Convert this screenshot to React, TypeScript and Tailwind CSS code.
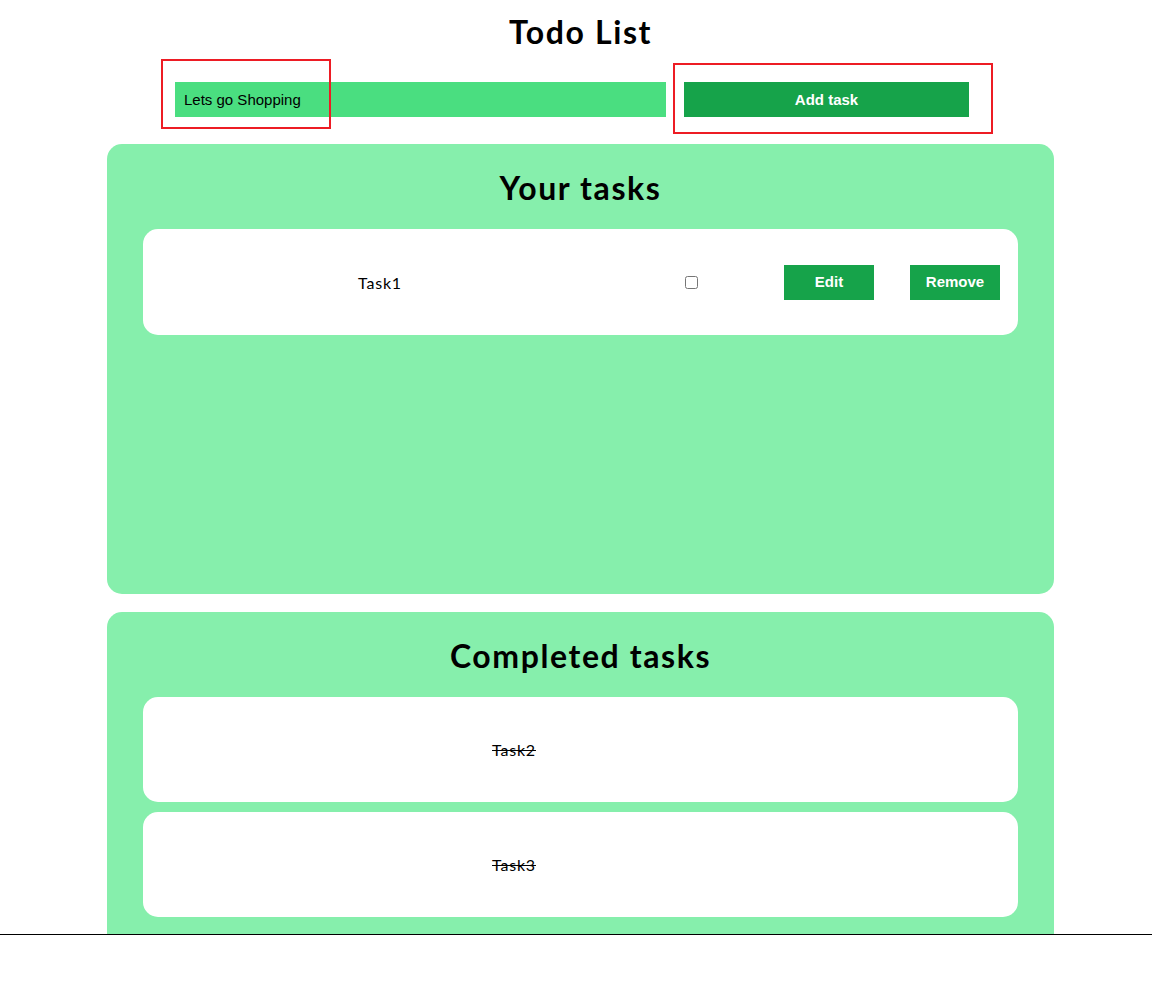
import React from "react";

export default function App() {
  const head = { fontFamily: "Lato, 'Noto Sans', sans-serif" };
  const arial = { fontFamily: "'Liberation Sans', Arial, sans-serif" };
  return (
    <div className="relative h-[935px] overflow-hidden border-b border-black bg-white">
      <h1 style={head} className="mt-[12px] pl-[9px] text-center text-[32px] leading-[40px] font-bold tracking-[1.6px] text-black">
        Todo List
      </h1>
      <div className="mt-[30px] flex pl-[175px] gap-[18px]" style={arial}>
        <input
          className="h-[35px] w-[491px] bg-[#4ade80] px-[9px] text-[15px] text-black outline-none"
          defaultValue="Lets go Shopping"
        />
        <button className="h-[35px] w-[285px] bg-[#16a34a] pt-[1px] text-[15px] font-bold text-white">Add task</button>
      </div>

      <div className="ml-[107px] mt-[27px] w-[947px] h-[450px] rounded-[15px] bg-[#86efac] pt-[24px]">
        <h2 style={head} className="text-center text-[32px] leading-[40px] font-bold tracking-[1.6px] text-black">Your tasks</h2>
        <div className="ml-[36px] mt-[21px] flex h-[106px] w-[875px] items-center rounded-[15px] bg-white" style={head}>
          <span className="w-[474px] pt-[1px] text-center text-[16px] tracking-[0.8px] text-black">Task1</span>
          <input type="checkbox" className="ml-[68px] h-[13px] w-[13px]" />
          <button className="ml-[86px] h-[35px] w-[90px] bg-[#16a34a] pt-[1px] text-[15px] font-bold text-white" style={arial}>
            Edit
          </button>
          <button className="ml-[36px] h-[35px] w-[90px] bg-[#16a34a] pt-[1px] text-[15px] font-bold text-white" style={arial}>
            Remove
          </button>
        </div>
      </div>

      <div className="ml-[107px] mt-[18px] w-[947px] h-[450px] rounded-[15px] bg-[#86efac] pt-[24px]">
        <h2 style={head} className="text-center text-[32px] leading-[40px] font-bold tracking-[1.6px] text-black">Completed tasks</h2>
        <div className="ml-[36px] mt-[21px] flex flex-col gap-[10px]">
          {["Task2", "Task3"].map((t) => (
            <div key={t} className="flex h-[105px] w-[875px] items-center rounded-[15px] bg-white" style={head}>
              <span className="w-[742px] text-center text-[16px] tracking-[0.8px] text-black line-through">{t}</span>
            </div>
          ))}
        </div>
      </div>

      <div className="absolute left-[161px] top-[59px] h-[70px] w-[170px] border-2 border-[#ed1c24]" />
      <div className="absolute left-[673px] top-[63px] h-[71px] w-[320px] border-2 border-[#ed1c24]" />
    </div>
  );
}
